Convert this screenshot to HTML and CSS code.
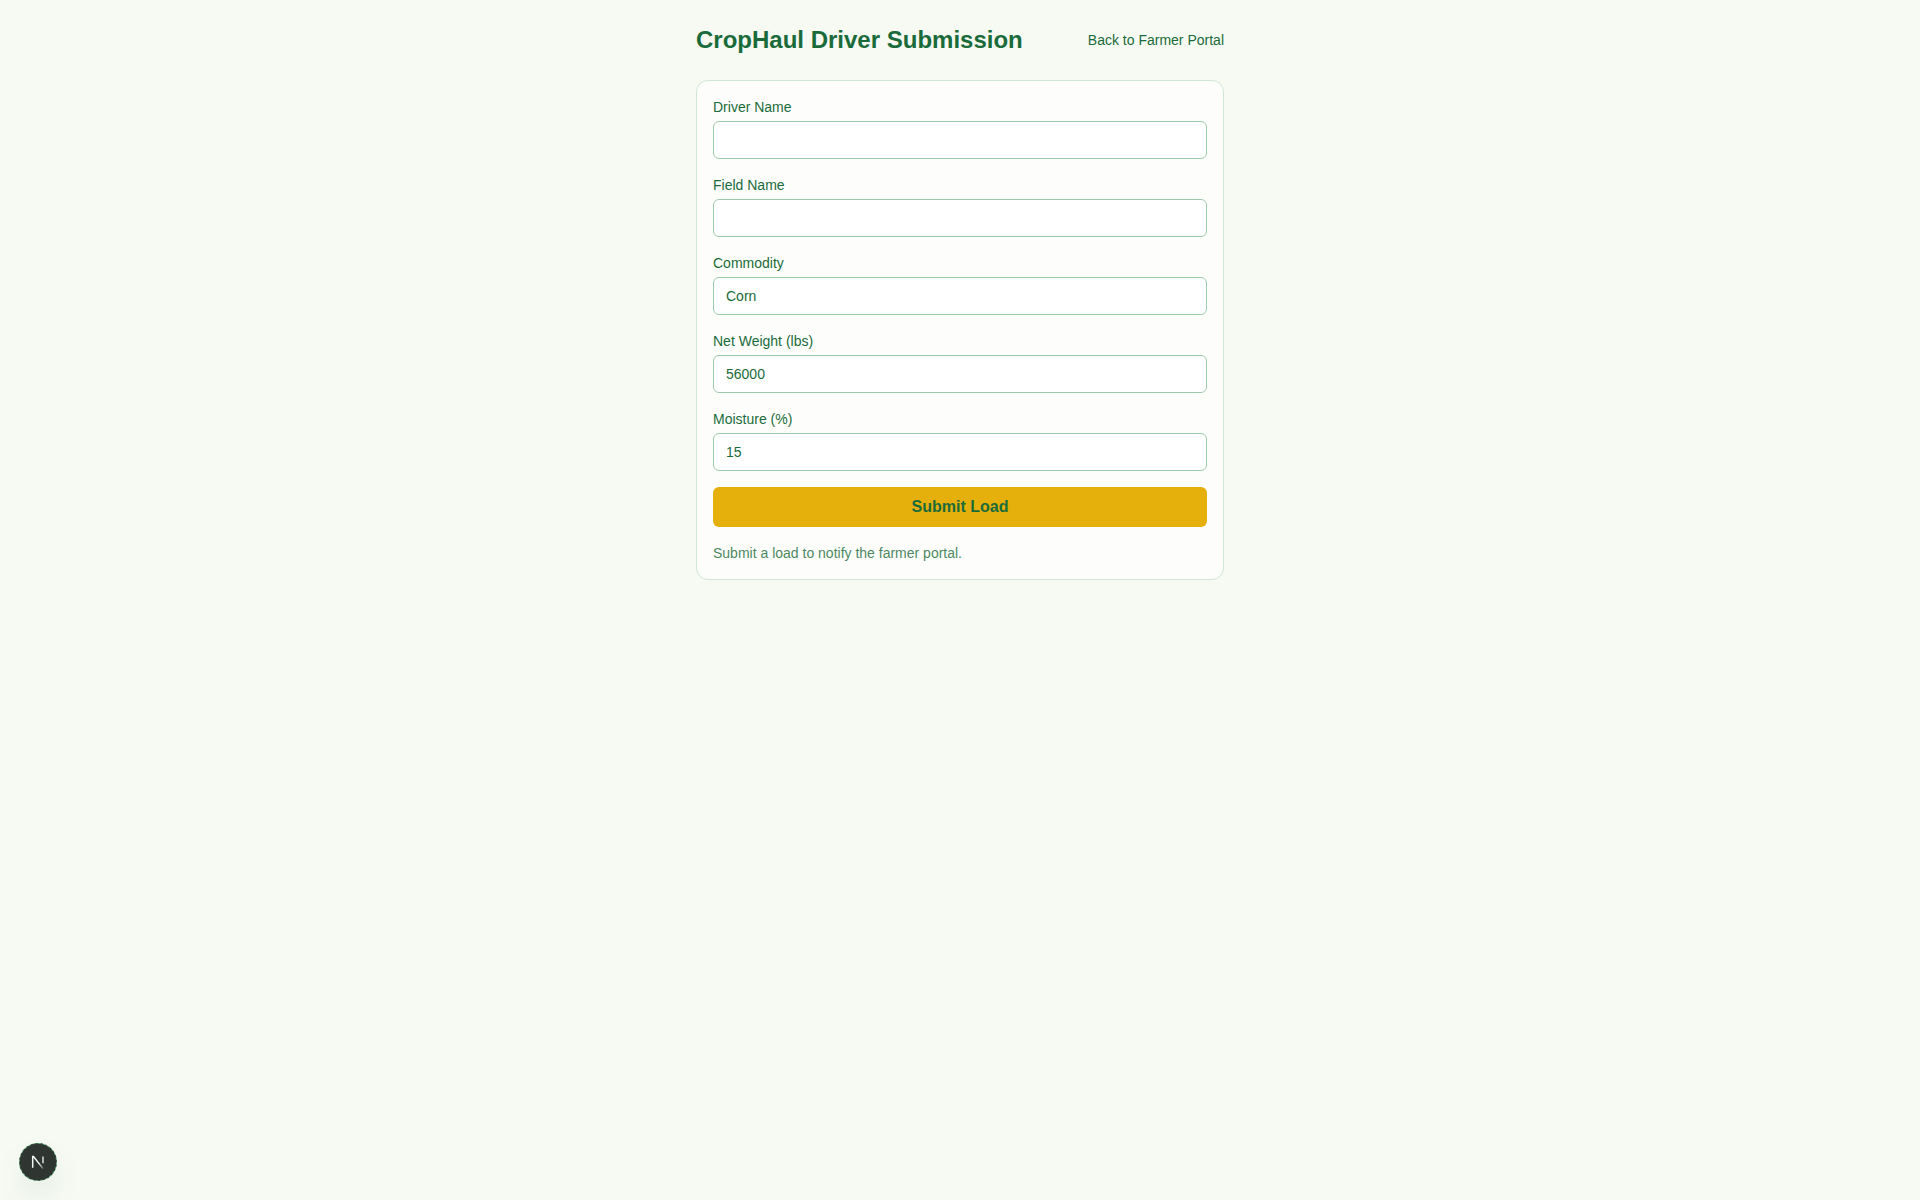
FILE: index.html
```html
<!doctype html>
<html>
<head>
  <meta name="viewport" content="width=device-width, initial-scale=1.0">
  <title>CropHaul Driver Submission</title>
  <link rel="stylesheet" href="styles.css">
</head>
<body>
  <main class="page">
    <header class="page-header">
      <h1 class="page-title">CropHaul Driver Submission</h1>
      <a class="back-link" href="#">Back to Farmer Portal</a>
    </header>

    <form class="card">
      <div class="field">
        <label class="field-label" for="driver">Driver Name</label>
        <input class="field-input" id="driver" type="text">
      </div>
      <div class="field">
        <label class="field-label" for="fieldname">Field Name</label>
        <input class="field-input" id="fieldname" type="text">
      </div>
      <div class="field">
        <label class="field-label" for="commodity">Commodity</label>
        <input class="field-input" id="commodity" type="text" value="Corn">
      </div>
      <div class="field">
        <label class="field-label" for="weight">Net Weight (lbs)</label>
        <input class="field-input" id="weight" type="text" value="56000">
      </div>
      <div class="field">
        <label class="field-label" for="moisture">Moisture (%)</label>
        <input class="field-input" id="moisture" type="text" value="15">
      </div>
      <button class="submit-btn" type="button">Submit Load</button>
      <p class="status-msg">Submit a load to notify the farmer portal.</p>
    </form>
  </main>

  <button class="dev-badge" type="button" aria-label="Open dev tools">
    <svg width="18" height="18" viewBox="0 0 18 18" fill="none">
      <defs>
        <linearGradient id="fade" x1="4" y1="4" x2="14" y2="16" gradientUnits="userSpaceOnUse">
          <stop offset="0.55" stop-color="#f4f6f4"/>
          <stop offset="1" stop-color="#f4f6f4" stop-opacity="0.25"/>
        </linearGradient>
      </defs>
      <path d="M3.7 14.8V3.6h.8L14 15.6" stroke="url(#fade)" stroke-width="1.5"/>
      <path d="M14 3.6v6.6" stroke="#f4f6f4" stroke-width="1.3"/>
    </svg>
  </button>
</body>
</html>
```

FILE: styles.css
```css
* {
  box-sizing: border-box;
}
body {
  margin: 0;
  min-height: 1200px;
  background: #f7faf3;
  color: #1a6b3a;
  font-family: "Liberation Sans", Arial, sans-serif;
}
.page {
  width: 576px;
  margin: 0 auto;
  padding: 24px;
}
.page-header {
  display: flex;
  justify-content: space-between;
  align-items: center;
  margin-bottom: 24px;
}
.page-title {
  margin: 0;
  font-size: 24px;
  line-height: 32px;
  font-weight: 700;
}
.back-link {
  font-size: 14px;
  line-height: 20px;
  color: #1a6b3a;
  text-decoration: none;
}
.card {
  display: flex;
  flex-direction: column;
  gap: 16px;
  padding: 16px;
  background: #fdfefc;
  border: 1px solid #cfe5d6;
  border-radius: 12px;
}
.field-label {
  display: block;
  margin-bottom: 4px;
  font-size: 14px;
  line-height: 20px;
}
.field-input {
  display: block;
  width: 100%;
  height: 38px;
  padding: 8px 12px;
  background: #fff;
  border: 1px solid #9ccbab;
  border-radius: 6px;
  color: #1a6b3a;
  font-family: inherit;
  font-size: 14px;
  outline: none;
}
.submit-btn {
  height: 40px;
  background: #e6b00c;
  border: 0;
  border-radius: 6px;
  color: #1a6b3a;
  font-family: inherit;
  font-size: 16px;
  font-weight: 700;
}
.status-msg {
  margin: 0;
  font-size: 14px;
  line-height: 20px;
  color: #1a6b3a;
  opacity: 0.8;
}
.dev-badge {
  position: fixed;
  left: 19px;
  bottom: 19px;
  display: flex;
  align-items: center;
  justify-content: center;
  width: 38px;
  height: 38px;
  padding: 0;
  background: #2f3531;
  border: 1px dashed #4f9a68;
  border-radius: 50%;
  box-shadow: 0 16px 32px -8px rgba(26, 107, 58, 0.22);
}
```
